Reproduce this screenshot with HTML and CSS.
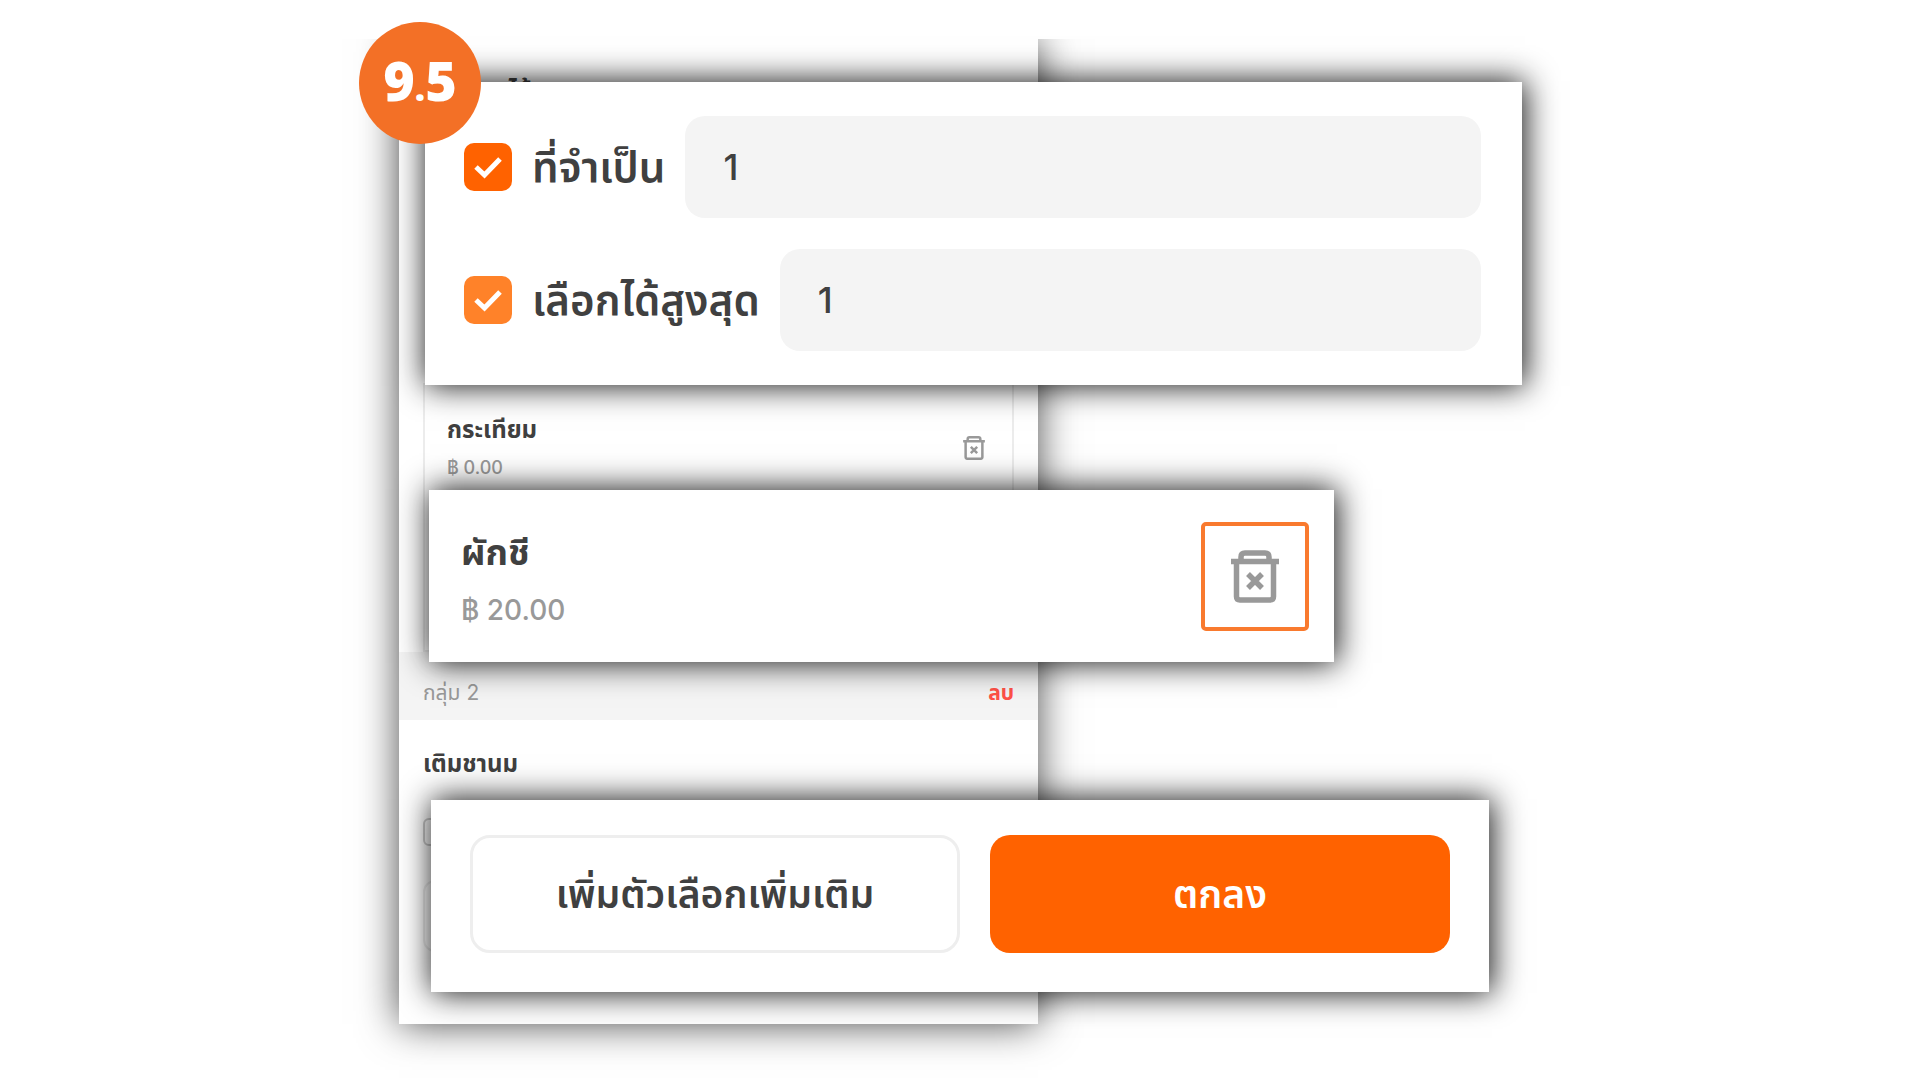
FILE: index.html
```html
<!DOCTYPE html>
<html lang="th">
<head>
<meta charset="utf-8">
<title>ตัวเลือกเพิ่มเติม</title>
<link rel="stylesheet" href="styles.css">
</head>
<body>
<svg class="symbols" aria-hidden="true">
  <symbol id="trash" viewBox="0 0 48 53">
    <path d="M0 11.500H48M5.500 11.500V46.500Q5.500 50 9 50H39Q42.500 50 42.500 46.500V11.500M10 11V7Q10 3 14 3H34Q38 3 38 7V11" fill="none" stroke="currentColor" stroke-width="5.500"/>
    <path d="M17 24L31 38M31 24L17 38" fill="none" stroke="currentColor" stroke-width="5.500"/>
  </symbol>
</svg>
<main class="stage">
  <section class="sheet">
    <h2 class="sheet-title">ตัวเลือก ได้</h2>
    <ul class="options">
      <li class="option">
        <div class="option-text">
          <span class="option-name">กระเทียม</span>
          <span class="option-price">฿ 0.00</span>
        </div>
        <button class="option-delete" aria-label="ลบกระเทียม"><svg><use href="#trash"/></svg></button>
      </li>
    </ul>
    <div class="group-bar">
      <span>กลุ่ม 2</span>
      <button class="group-delete">ลบ</button>
    </div>
    <div class="group">
      <h3 class="group-title">เติมชานม</h3>
      <input class="ghost-check" type="checkbox" aria-label="เติมชานม">
      <input class="ghost-field" type="text" aria-label="ตัวเลือก">
    </div>
  </section>

  <section class="card card-rules">
    <div class="rule">
      <input class="check" type="checkbox" id="required" checked>
      <label for="required">ที่จำเป็น</label>
      <input class="field" type="text" value="1" aria-label="ที่จำเป็น">
    </div>
    <div class="rule">
      <input class="check check-light" type="checkbox" id="maximum" checked>
      <label for="maximum">เลือกได้สูงสุด</label>
      <input class="field" type="text" value="1" aria-label="เลือกได้สูงสุด">
    </div>
  </section>

  <section class="card card-item">
    <div class="item-text">
      <h3 class="item-name">ผักชี</h3>
      <p class="item-price">฿ 20.00</p>
    </div>
    <button class="item-delete" aria-label="ลบผักชี"><svg><use href="#trash"/></svg></button>
  </section>

  <section class="card card-actions">
    <button class="action action-more">เพิ่มตัวเลือกเพิ่มเติม</button>
    <button class="action action-ok">ตกลง</button>
  </section>

  <div class="badge">9<span class="badge-dot">.</span>5</div>
</main>
</body>
</html>
```

FILE: styles.css
```css
* { box-sizing: border-box; }

body {
  margin: 0;
  background: #fff;
  color: #404040;
  font-family: Inter, "Noto Sans Thai", "Noto Sans", sans-serif;
}

h2, h3, p, ul { margin: 0; padding: 0; }
button { padding: 0; border: 0; background: none; font: inherit; cursor: pointer; }
.symbols { position: absolute; width: 0; height: 0; }

.stage {
  position: relative;
  max-width: 1202px;
  margin: 0 auto;
  padding: 39px 0 54px 40px;
}

.sheet {
  width: 55%;
  background: #fff;
  box-shadow: 0 0 38px rgba(0, 0, 0, .7);
  clip-path: inset(0 -60px -60px -60px);
}

.sheet-title {
  padding: 36px 24px 0;
  font-size: 24px;
  line-height: 32px;
}

.options {
  margin: 276px 24px 0;
  height: 269px;
  border: 2px solid #ececec;
  list-style: none;
}

.option {
  display: flex;
  justify-content: space-between;
  align-items: center;
  padding: 25px 27px 0 22px;
}

.option-text { display: flex; flex-direction: column; }
.option-name { font-size: 24px; line-height: 40px; font-weight: 700; }
.option-price { font-size: 18px; line-height: 36px; color: #999; font-weight: 500; }
.option-delete { width: 22px; height: 24px; color: #999; }
.option-delete svg, .item-delete svg { display: block; width: 100%; height: 100%; }

.group-bar {
  display: flex;
  justify-content: space-between;
  align-items: center;
  height: 68px;
  padding: 14px 24px 0;
  background: #f4f4f4;
  color: #999;
  font-size: 21px;
}

.group-delete { color: #ff5147; font-weight: 700; }

.group {
  display: flex;
  flex-direction: column;
  align-items: flex-start;
  gap: 34px;
  padding: 24px 24px 72px;
}

.group-title { font-size: 24px; line-height: 40px; }

.ghost-check, .ghost-field {
  appearance: none;
  margin: 0;
  border: 2px solid #ddd;
  background: none;
}

.ghost-check { width: 28px; height: 28px; border-radius: 6px; border-color: #ccc; }
.ghost-field { width: 100%; height: 72px; border-radius: 12px; border-color: #eee; }

.card {
  position: absolute;
  background: #fff;
  box-shadow: 2px 0 30px 1px rgba(0, 0, 0, .92);
}

.card-rules {
  display: flex;
  left: 66px;
  right: 39px;
  top: 82px;
  flex-direction: column;
  gap: 31px;
  padding: 34px 41px 34px 39px;
}

.rule { display: flex; align-items: center; gap: 20px; }
.rule label { font-size: 42px; line-height: 60px; font-weight: 600; }

.check {
  appearance: none;
  flex: none;
  width: 48px;
  height: 48px;
  margin: 0;
  border-radius: 10px;
  background: #ff6200 url('data:image/svg+xml,<svg xmlns="http://www.w3.org/2000/svg" viewBox="0 0 48 48"><path d="M12 24L20.500 32L36 16" fill="none" stroke="white" stroke-width="5"/></svg>');
}

.check-light { background-color: #ff8229; }

.field {
  flex: 1;
  min-width: 0;
  height: 102px;
  padding: 0 38px;
  border: 0;
  border-radius: 20px;
  background: #f4f4f4;
  color: inherit;
  font: inherit;
  font-size: 36px;
  font-weight: 500;
}

.card-item {
  display: flex;
  left: 70px;
  right: 227px;
  top: 490px;
  min-height: 172px;
  justify-content: space-between;
  align-items: center;
  padding: 0 25px 0 32px;
}

.item-text { padding-top: 8px; }
.item-name { font-size: 36px; line-height: 60px; }
.item-price { font-size: 28px; line-height: 56px; color: #999; font-weight: 500; }

.item-delete {
  width: 108px;
  height: 109px;
  padding: 24px 26px;
  border: 4px solid #f97a2e;
  border-radius: 5px;
  color: #999;
}

.card-actions {
  display: grid;
  left: 72px;
  right: 72px;
  top: 800px;
  grid-template-columns: 49fr 46fr;
  gap: 30px;
  padding: 35px 39px 39px;
}

.action {
  height: 118px;
  padding-top: 4px;
  border-radius: 20px;
  font-size: 39px;
  font-weight: 600;
}

.action-more { border: 3px solid #eee; color: #404040; }
.action-ok { background: #ff6200; color: #fff; }

.badge {
  position: absolute;
  left: 0;
  top: 22px;
  width: 122px;
  height: 122px;
  border-radius: 50%;
  background: #f37026;
  color: #fff;
  font: 800 54px/116px "Open Sans", sans-serif;
  text-align: center;
}

.badge-dot { font-size: 36px; }
```
